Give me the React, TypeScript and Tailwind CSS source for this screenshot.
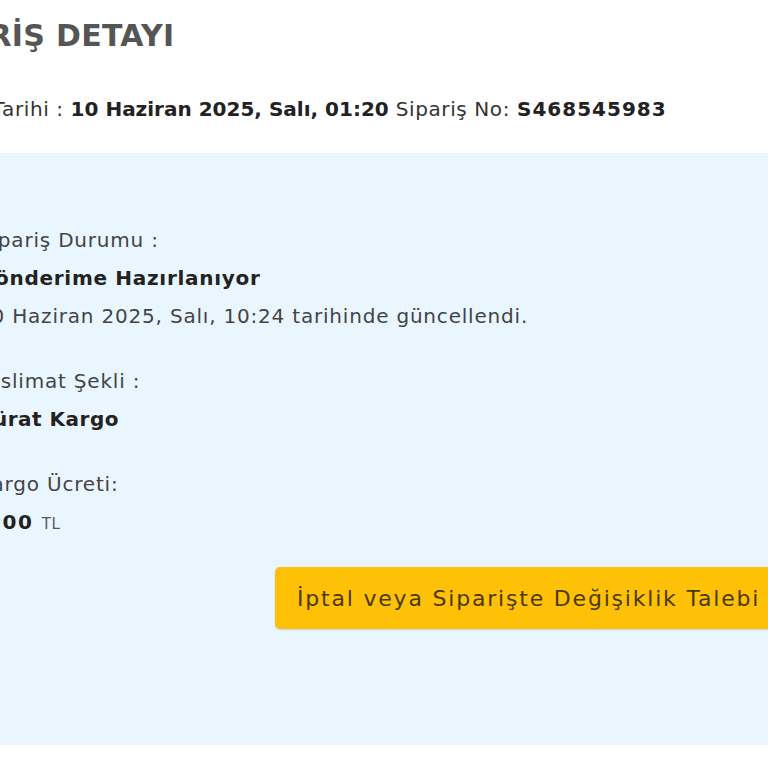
export default function App() {
  return (
    <div
      className="min-h-screen w-[768px] overflow-hidden bg-white text-[#333]"
      style={{ fontFamily: '"DejaVu Sans", "Open Sans", sans-serif' }}
    >
      {/* sayfa sola kaymış durumda, ilk karakterler görünmüyor */}
      <div className="-ml-[88px] w-[1000px] pt-[16px]">
        <h1 className="text-[30px] leading-[40px] font-semibold tracking-[0.3px] text-[#555]">SİPARİŞ DETAYI</h1>
        <p className="mt-[38px] pl-[2px] text-[20px] leading-[30px] tracking-[0.6px] text-[#333]">
          Sipariş Tarihi : <span className="font-bold tracking-normal text-[#222]">10 Haziran 2025, Salı, 01:20</span> Sipariş No:{' '}
          <span className="font-bold tracking-[1px] text-[#222]">S468545983</span>
        </p>

        <div className="mt-[29px] h-[592px] bg-[#eaf6ff] pl-[66px] pt-[68px]">
          <div className="flex flex-col gap-[27px] text-[20px] leading-[38px] tracking-[0.8px]">
            <div>
              <p className="text-[#444]">Sipariş Durumu :</p>
              <p className="font-bold tracking-[0.7px] text-[#222]">Gönderime Hazırlanıyor</p>
              <p className="text-[#444]">10 Haziran 2025, Salı, 10:24 tarihinde güncellendi.</p>
            </div>
            <div>
              <p className="text-[#444]">Teslimat Şekli :</p>
              <p className="font-bold tracking-[0.5px] text-[#222]">Sürat Kargo</p>
            </div>
            <div>
              <p className="text-[#444]">Kargo Ücreti:</p>
              <p className="font-bold tracking-[1.5px] text-[#222]">
                0,00 <span className="text-[15px] font-normal tracking-[0.5px] text-[#555]">TL</span>
              </p>
            </div>
          </div>

          <button className="ml-[297px] mt-[24px] h-[62px] w-[540px] rounded-[5px] bg-[#ffc107] pl-[22px] text-left text-[22px] tracking-[1.8px] whitespace-nowrap text-[#4a3a00] shadow-[0_1px_2px_rgba(0,0,0,0.15)]">
            İptal veya Siparişte Değişiklik Talebi
          </button>
        </div>
      </div>
    </div>
  );
}
